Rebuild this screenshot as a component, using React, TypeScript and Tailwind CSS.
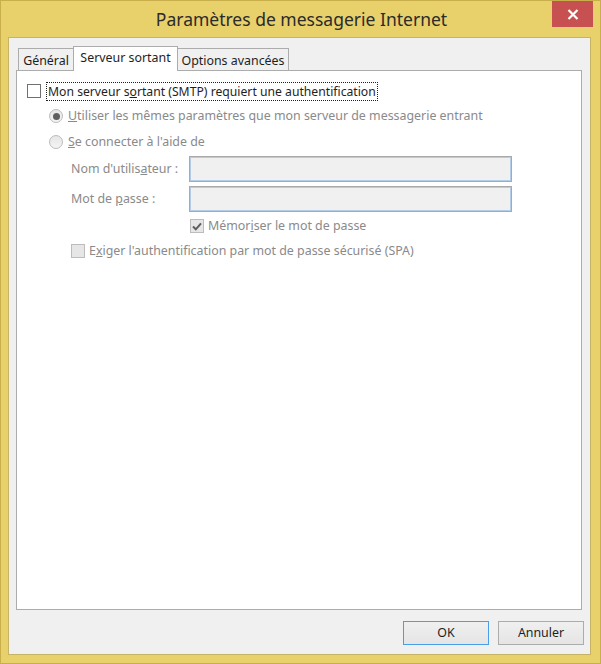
const font = { fontFamily: '"Noto Sans", "Open Sans", sans-serif' };

const Radio = ({ checked }: { checked?: boolean }) => (
  <span className="flex h-[14px] w-[14px] items-center justify-center rounded-full border border-[#bcbcbc] bg-gradient-to-b from-[#e6e6e6] to-[#f4f4f4]">
    {checked && <span className="h-[7px] w-[7px] rounded-full bg-[#5f5f5f]" />}
  </span>
);

const Check = ({ checked, disabled }: { checked?: boolean; disabled?: boolean }) => (
  <span
    className={
      "flex h-[14px] w-[14px] shrink-0 items-center justify-center border " +
      (disabled ? "border-[#bcbcbc] bg-[#e6e6e6]" : "border-[#707070] bg-white")
    }
  >
    {checked && (
      <svg width="10" height="9" viewBox="0 0 10 9">
        <path d="M1 4.5 L3.8 7.3 L9 1.3" fill="none" stroke="#5d5d5d" strokeWidth="2" />
      </svg>
    )}
  </span>
);

export default function App() {
  return (
    <div
      className="flex h-[664px] w-[601px] flex-col border border-[#c9ae4c] bg-[#e8d06b] text-[12.4px] text-[#1e1e1e]"
      style={font}
    >
      <div className="relative flex h-[36px] items-center justify-center">
        <span className="pl-[2px] pt-[1px] text-[17.5px] text-[#2b2b2b]">Paramètres de messagerie Internet</span>
        <div className="absolute right-[7px] top-0 flex h-[26px] w-[41px] items-center justify-center bg-[#c75050]">
          <svg width="12" height="11" viewBox="0 0 12 11">
            <path d="M1.5 1 L10.5 10 M10.5 1 L1.5 10" stroke="white" strokeWidth="2.2" />
          </svg>
        </div>
      </div>

      <div className="ml-[7px] flex h-[618px] w-[583px] flex-col border border-[#c7b365] bg-[#f0f0f0] pl-[7px] pt-[8px]">
        <div className="ml-[2px] flex h-[24px] items-end">
          <div className="flex h-[22px] w-[56px] items-center justify-center border border-b-0 border-[#acacac] bg-[#f0f0f0] pt-[3px]">
            Général
          </div>
          <div className="relative z-10 -mb-px -ml-px flex h-[25px] w-[105px] items-start justify-center border border-b-0 border-[#acacac] bg-white pt-[2px]">
            Serveur sortant
          </div>
          <div className="-ml-px flex h-[22px] w-[112px] items-center justify-center border border-b-0 border-[#acacac] bg-[#f0f0f0] pt-[3px]">
            Options avancées
          </div>
        </div>

        <div className="flex h-[540px] w-[566px] flex-col border border-[#acacac] bg-white pl-[10px] pt-[10px]">
          <div className="flex h-[20px] items-center">
            <Check />
            <span className="ml-[5px] border border-dotted border-[#1e1e1e] px-px text-[12.2px] leading-[17px]">
              Mon serveur s<u>o</u>rtant (SMTP) requiert une authentification
            </span>
          </div>

          <div className="ml-[22px] mt-[5px] flex h-[20px] items-center text-[#8a8a8a]">
            <Radio checked />
            <span className="ml-[5px]">
              <u>U</u>tiliser les mêmes paramètres que mon serveur de messagerie entrant
            </span>
          </div>

          <div className="ml-[22px] mt-[6px] flex h-[20px] items-center text-[#8a8a8a]">
            <Radio />
            <span className="ml-[5px]">
              <u>S</u>e connecter à l'aide de
            </span>
          </div>

          <div className="ml-[44px] mt-[4px] flex h-[26px] items-center text-[#8a8a8a]">
            <span className="w-[118px]">
              Nom d'utilis<u>a</u>teur :
            </span>
            <div className="h-[26px] w-[323px] border border-[#a9a9a9] bg-[#f0f0f0] shadow-[inset_0_0_0_1px_#b3cce8]" />
          </div>

          <div className="ml-[44px] mt-[4px] flex h-[26px] items-center text-[#8a8a8a]">
            <span className="w-[118px]">
              Mot de <u>p</u>asse :
            </span>
            <div className="h-[26px] w-[323px] border border-[#a9a9a9] bg-[#f0f0f0] shadow-[inset_0_0_0_1px_#b3cce8]" />
          </div>

          <div className="ml-[163px] mt-[4px] flex h-[20px] items-center text-[#8a8a8a]">
            <Check checked disabled />
            <span className="ml-[4px]">
              Mémor<u>i</u>ser le mot de passe
            </span>
          </div>

          <div className="ml-[44px] mt-[5px] flex h-[20px] items-center text-[#8a8a8a]">
            <Check disabled />
            <span className="ml-[4px]">
              E<u>x</u>iger l'authentification par mot de passe sécurisé (SPA)
            </span>
          </div>
        </div>

        <div className="mt-[11px] flex justify-end gap-[9px] pr-[6px]">
          <button className="flex h-[24px] w-[86px] items-center justify-center border border-[#4a9ee8] bg-gradient-to-b from-[#f0f0f0] to-[#e5e5e5]">
            OK
          </button>
          <button className="flex h-[24px] w-[86px] items-center justify-center border border-[#acacac] bg-gradient-to-b from-[#f0f0f0] to-[#e5e5e5]">
            Annuler
          </button>
        </div>
      </div>
    </div>
  );
}
